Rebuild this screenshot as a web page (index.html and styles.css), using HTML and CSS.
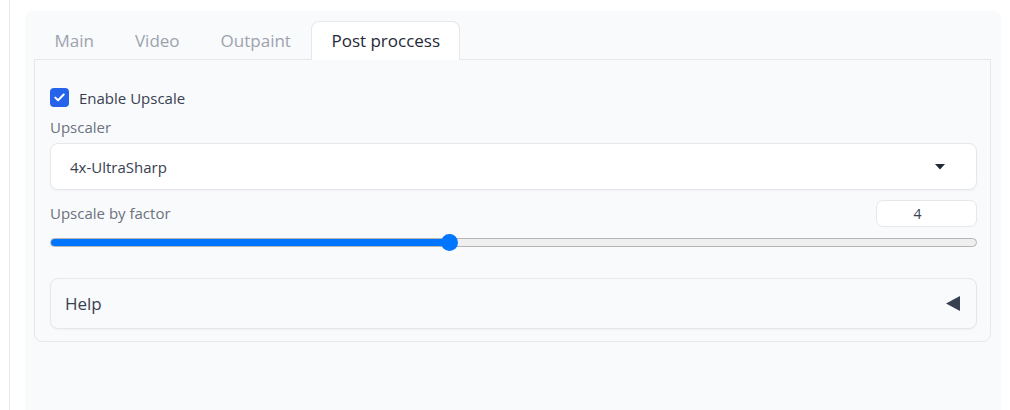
FILE: index.html
```html
<!DOCTYPE html>
<html>
<head>
<meta charset="utf-8">
<link rel="stylesheet" href="styles.css">
</head>
<body>
<div class="app">
  <div class="panel">
    <div class="tabs">
      <div class="tab">Main</div>
      <div class="tab">Video</div>
      <div class="tab">Outpaint</div>
      <div class="tab active">Post proccess</div>
    </div>
    <div class="content">
      <label class="check-row">
        <span class="checkbox">
          <svg width="11" height="9" viewBox="0 0 11 9"><path d="M1.3 4.6 L4.1 7.3 L9.7 1.5" fill="none" stroke="#fff" stroke-width="2" stroke-linecap="round" stroke-linejoin="round"/></svg>
        </span>
        <span class="check-label">Enable Upscale</span>
      </label>
      <div class="field-label">Upscaler</div>
      <div class="dropdown">
        <span class="dd-value">4x-UltraSharp</span>
        <svg class="dd-arrow" width="10" height="6" viewBox="0 0 10 6"><path d="M0 0 H10 L5 5.5 Z" fill="#1f2937"/></svg>
      </div>
      <div class="slider-head">
        <span class="field-label">Upscale by factor</span>
        <div class="number">4</div>
      </div>
      <div class="slider">
        <div class="track">
          <div class="fill" style="width: 43%"></div>
        </div>
        <div class="thumb" style="left: 43%"></div>
      </div>
      <div class="help">
        <span class="help-label">Help</span>
        <svg width="14" height="15" viewBox="0 0 14 15"><path d="M0 7.5 L14 0 V15 Z" fill="#374151"/></svg>
      </div>
    </div>
  </div>
</div>
</body>
</html>
```
FILE: styles.css
```css
html, body {
  margin: 0;
  padding: 0;
  background: #ffffff;
}
body {
  font-family: "Open Sans", "Liberation Sans", sans-serif;
  color: #374151;
}
.app {
  margin-left: 9px;
  border-left: 1px solid #e5e7eb;
  height: 410px;
  box-sizing: border-box;
  padding: 11px 9px 0 15px;
}
.panel {
  width: 976px;
  height: 399px;
  box-sizing: border-box;
  background: #f9fafb;
  border-radius: 8px 8px 0 0;
  padding: 10px 10px 0 9px;
}
.tabs {
  display: flex;
  height: 38px;
}
.tab {
  padding: 0 20.5px;
  font-size: 17px;
  line-height: 40px;
  color: #9ca3af;
  box-sizing: border-box;
}
.tab.active {
  background: #ffffff;
  color: #1f2937;
  border: 1px solid #e5e7eb;
  border-bottom: none;
  border-radius: 8px 8px 0 0;
  height: 39px;
  line-height: 38px;
  margin-bottom: -1px;
  padding: 0 19px;
  position: relative;
  z-index: 1;
}
.content {
  border: 1px solid #e5e7eb;
  border-radius: 0 0 8px 8px;
  padding: 28px 13px 12px 15px;
  height: 283px;
  box-sizing: border-box;
}
.check-row {
  display: flex;
  align-items: center;
  height: 19px;
}
.checkbox {
  width: 19px;
  height: 19px;
  border-radius: 4px;
  background: #2563eb;
  display: flex;
  align-items: center;
  justify-content: center;
}
.check-label {
  margin-left: 10px;
  font-size: 15px;
  line-height: 18px;
  color: #374151;
}
.field-label {
  display: block;
  font-size: 15px;
  line-height: 20px;
  color: #6b7280;
  margin-top: 10px;
}
.dropdown {
  margin-top: 6px;
  height: 47px;
  box-sizing: border-box;
  background: #ffffff;
  border: 1px solid #e5e7eb;
  border-radius: 8px;
  box-shadow: 0 1px 2px rgba(0, 0, 0, 0.04);
  display: flex;
  align-items: center;
  padding: 0 31px 0 19px;
}
.dd-value {
  flex: 1;
  font-size: 15px;
  color: #374151;
}
.slider-head {
  margin-top: 10px;
  display: flex;
  align-items: center;
  justify-content: space-between;
  height: 27px;
}
.slider-head .field-label {
  margin-top: -2px;
}
.number {
  width: 101px;
  height: 27px;
  box-sizing: border-box;
  background: #ffffff;
  border: 1px solid #e5e7eb;
  border-radius: 7px;
  font-size: 14px;
  line-height: 25px;
  text-align: center;
  padding-right: 18px;
  color: #374151;
}
.slider {
  position: relative;
  margin-top: 6px;
  height: 18px;
  display: flex;
  align-items: center;
}
.track {
  width: 100%;
  height: 9px;
  box-sizing: border-box;
  border-radius: 5px;
  background: #efefef;
  border: 1px solid #b5b5b5;
  overflow: hidden;
}
.fill {
  height: 100%;
  background: #0075ff;
  margin: -1px;
  padding: 1px;
}
.thumb {
  position: absolute;
  top: 0;
  width: 17px;
  height: 17px;
  margin-left: -8px;
  margin-top: 1px;
  border-radius: 50%;
  background: #0075ff;
}
.help {
  margin-top: 27px;
  height: 51px;
  box-sizing: border-box;
  border: 1px solid #e5e7eb;
  border-radius: 8px;
  background: #f9fafb;
  box-shadow: 0 1px 2px rgba(0, 0, 0, 0.04);
  display: flex;
  align-items: center;
  justify-content: space-between;
  padding: 0 16px 0 14px;
}
.help-label {
  font-size: 17px;
  color: #374151;
}
```
